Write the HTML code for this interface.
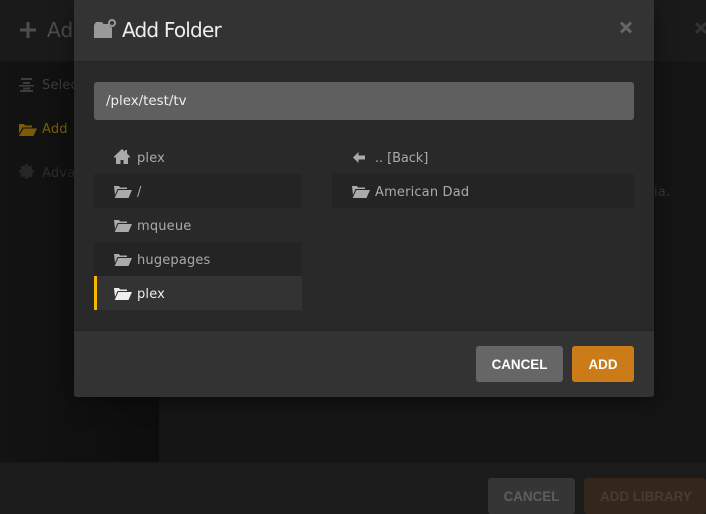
<!DOCTYPE html>
<html><head><meta charset="utf-8">
<style>
html,body{margin:0;padding:0;background:#151515}
#p{position:relative;width:706px;height:514px;overflow:hidden;background:#151515;font-family:"DejaVu Sans","Liberation Sans",sans-serif;font-size:13px}
#p div,#p svg{position:absolute}
.t{white-space:nowrap;line-height:20px;letter-spacing:.17px}
.b{border-radius:3px;text-align:center;font-weight:bold;font-family:"Liberation Sans",sans-serif;font-size:13.4px;line-height:38px;height:36px}
</style></head><body><div id="p">
<div style="left:0;top:0;width:706px;height:61px;background:#1a1a1a;border-bottom:1px solid #151515"></div>
<div style="left:0;top:62px;width:159px;height:400px;background:linear-gradient(90deg,#131313,#0d0d0d)"></div>
<div style="left:0;top:462px;width:706px;height:52px;background:#1b1b1b;border-top:1px solid #181818"></div>
<svg style="left:20px;top:22px" width="16" height="16"><path d="M6.500 0h3v6.500H16v3H9.500V16h-3V9.500H0v-3h6.500z" fill="#4d4d4d"/></svg>
<div class="t" style="left:47px;top:19px;font-size:20px;color:#4d4d4d;line-height:22px">Add</div>
<svg style="left:695px;top:21px" width="11" height="13"><path d="M1 2l10 10M11 2L1 12" stroke="#333" stroke-width="3"/></svg>
<svg style="left:19px;top:78px" width="15" height="14"><path d="M2 0h11v2H2zM4 4h7v2H4zM0 7h15v1.500H0zM4 9.500h7v2H4zM1 12h13v2H1z" fill="#3d3d3d"/></svg>
<div class="t" style="left:42px;top:76px;color:#3d3d3d">Select</div>
<svg style="left:19px;top:122px" width="18" height="14"><path d="M0 2h5l1 1.500h7v2H3.500L0 12zM4.500 6.500H18L14.500 14H0z" fill="#7d5c08"/></svg>
<div class="t" style="left:42px;top:120px;color:#7d5c08">Add</div>
<svg style="left:19px;top:164px" width="15" height="15"><circle cx="7.500" cy="7.500" r="4.500" fill="none" stroke="#262626" stroke-width="3.500"/><path d="M7.500 0v15M0 7.500h15M2.200 2.200l10.600 10.600M12.800 2.200L2.200 12.800" stroke="#262626" stroke-width="2.500"/></svg>
<div class="t" style="left:42px;top:164px;color:#2c2c2c">Advanced</div>
<div class="t" style="left:654px;top:183px;color:#3a3a3a">ia.</div>
<div class="b" style="left:488px;top:478px;width:87px;background:#353535;color:#5e5e5e">CANCEL</div>
<div class="b" style="left:584px;top:478px;width:122px;background:#33261a;color:#463d30;text-align:left;text-indent:16px">ADD LIBRARY</div>

<div style="left:74px;top:0;width:580px;height:397px;background:#292929;border-radius:0 0 3px 3px;box-shadow:0 4px 24px rgba(0,0,0,.45)"></div>
<div style="left:74px;top:0;width:580px;height:61px;background:#333;border-bottom:1px solid #242424"></div>
<svg style="left:94px;top:18px" width="23" height="21"><path d="M0 7l2-3h6l1.500 2H14.500A4.500 4.500 0 0 0 18 9.500V20H0z" fill="#999"/><circle cx="18" cy="5" r="3" fill="none" stroke="#999" stroke-width="2"/></svg>
<div class="t" style="left:122px;top:18px;font-size:20px;line-height:24px;color:#eee;font-family:'DejaVu Sans',sans-serif;letter-spacing:-.8px">Add Folder</div>
<svg style="left:620px;top:21px" width="12" height="13"><path d="M1 1.500l10 10M11 1.500l-10 10" stroke="#666" stroke-width="3"/></svg>
<div style="left:94px;top:82px;width:540px;height:38px;background:#5f5f5f;border-radius:3px"></div>
<div class="t" style="left:106px;top:92px;color:#eee;font-size:13.4px;letter-spacing:0">/plex/test/tv</div>

<div style="left:94px;top:174px;width:208px;height:34px;background:#242424"></div>
<div style="left:94px;top:242px;width:208px;height:34px;background:#242424"></div>
<div style="left:94px;top:276px;width:208px;height:34px;background:#333"></div>
<div style="left:94px;top:276px;width:3px;height:34px;background:#f5b800"></div>
<div style="left:332px;top:174px;width:302px;height:34px;background:#242424"></div>

<svg style="left:114px;top:149px" width="16" height="15"><path d="M8 0l3 2.700V1h2v3.500L16 7.500v1h-2V15H9.500v-4h-3v4H2V8.500H0v-1z" fill="#aaa"/></svg>
<svg style="left:114px;top:185px" width="18" height="13"><path d="M0 1h5l1 1.500h7V4H3.500L1 10zM4.300 5H18l-3.500 8H.7z" fill="#aaa"/></svg>
<svg style="left:114px;top:219px" width="18" height="13"><path d="M0 1h5l1 1.500h7V4H3.500L1 10zM4.300 5H18l-3.500 8H.7z" fill="#aaa"/></svg>
<svg style="left:114px;top:253px" width="18" height="13"><path d="M0 1h5l1 1.500h7V4H3.500L1 10zM4.300 5H18l-3.500 8H.7z" fill="#aaa"/></svg>
<svg style="left:114px;top:287px" width="18" height="13"><path d="M0 1h5l1 1.500h7V4H3.500L1 10zM4.300 5H18l-3.500 8H.7z" fill="#eee"/></svg>
<svg style="left:353px;top:152px" width="12" height="11"><path d="M0 5.500L5.500 0v3.500H12v4H5.500V11z" fill="#aaa"/></svg>
<svg style="left:352px;top:185px" width="18" height="13"><path d="M0 1h5l1 1.500h7V4H3.500L1 10zM4.300 5H18l-3.500 8H.7z" fill="#aaa"/></svg>

<div class="t" style="left:137px;top:149px;color:#aaa">plex</div>
<div class="t" style="left:137px;top:183px;color:#aaa">/</div>
<div class="t" style="left:137px;top:217px;color:#aaa">mqueue</div>
<div class="t" style="left:137px;top:251px;color:#aaa">hugepages</div>
<div class="t" style="left:137px;top:285px;color:#eee">plex</div>
<div class="t" style="left:375px;top:149px;color:#aaa;letter-spacing:-.1px">.. [Back]</div>
<div class="t" style="left:375px;top:183px;color:#aaa">American Dad</div>

<div style="left:74px;top:330px;width:580px;height:67px;background:#333;border-top:1px solid #242424;border-radius:0 0 3px 3px;box-sizing:border-box"></div>
<div class="b" style="left:476px;top:346px;width:87px;background:#666;color:#fff">CANCEL</div>
<div class="b" style="left:572px;top:346px;width:62px;background:#cc7b19;color:#fff">ADD</div>
</div></body></html>
